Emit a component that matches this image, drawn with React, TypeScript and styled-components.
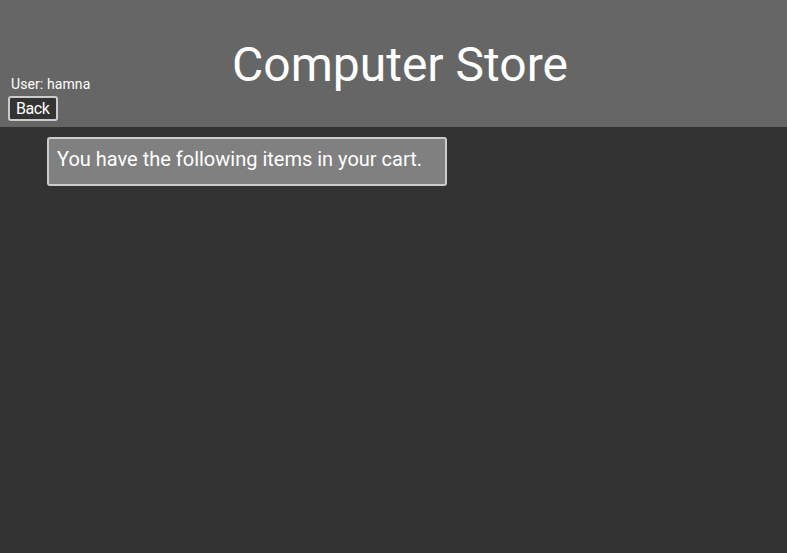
import { createGlobalStyle, styled } from "styled-components";

const GlobalStyle = createGlobalStyle`
    html, body {
        margin: 0;
        padding: 0;
        background-color: #333333;
        font-family: Roboto, "Liberation Sans", sans-serif;
        color: white;
    }
`;

const App = () => {
    return (
        <>
            <GlobalStyle />
            <Page>
                <Header>
                    <UserBox>
                        <UserName>User: hamna</UserName>
                        <BackButton>Back</BackButton>
                    </UserBox>
                    <Title>Computer Store</Title>
                    <span />
                </Header>

                <Content>
                    <CartCard>You have the following items in your cart.</CartCard>
                </Content>
            </Page>
        </>
    );
};

export default App;

const Page = styled.div`
    min-height: 553px;
    background-color: #333333;
`;

const Header = styled.header`
    display: grid;
    grid-template-columns: 1fr auto 1fr;
    align-items: end;
    height: 127px;
    padding: 0 0 6px 8px;
    box-sizing: border-box;
    background-color: #666666;
`;

const UserBox = styled.div`
    display: flex;
    flex-direction: column;
    align-items: flex-start;
    gap: 4px;
`;

const UserName = styled.span`
    font-size: 14px;
    letter-spacing: 0.1px;
    padding-left: 3px;
`;

const BackButton = styled.button`
    font-family: Roboto, "Liberation Sans", sans-serif;
    font-size: 16px;
    letter-spacing: -0.4px;
    color: white;
    background-color: #333333;
    border: 2px solid #cccccc;
    border-radius: 3px;
    padding: 1px 6px;
    line-height: 19px;
`;

const Title = styled.h1`
    margin: 0 0 28px 5px;
    font-size: 48px;
    font-weight: 400;
`;

const Content = styled.main`
    padding: 10px 47px;
`;

const CartCard = styled.div`
    width: 400px;
    box-sizing: border-box;
    padding: 9px 8px 13px;
    font-size: 20px;
    line-height: 23px;
    background-color: #808080;
    border: 2px solid #cccccc;
    border-radius: 3px;
`;
